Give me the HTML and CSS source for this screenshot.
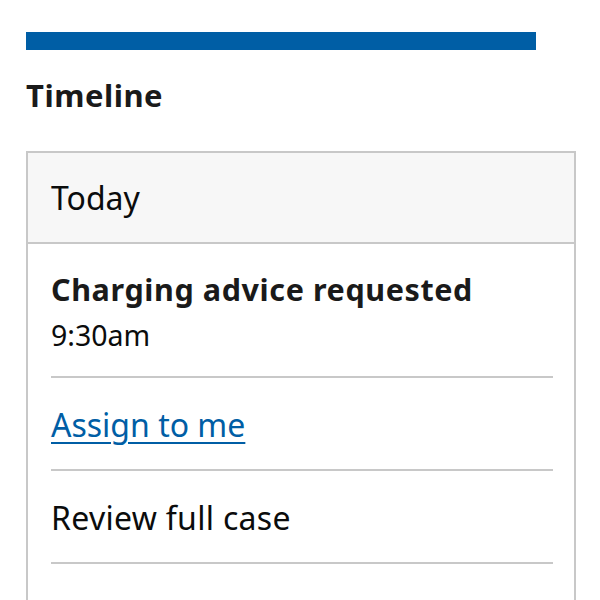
FILE: index.html
```html
<!DOCTYPE html>
<html lang="en">
<head>
<meta charset="utf-8">
<title>Timeline</title>
<link rel="stylesheet" href="styles.css">
</head>
<body>
<div class="page">
  <div class="bar"></div>
  <h2 class="heading">Timeline</h2>
  <section class="card">
    <header class="card-head">Today</header>
    <div class="card-body">
      <div class="row row-event">
        <p class="event-title">Charging advice requested</p>
        <p class="event-time">9:30am</p>
      </div>
      <div class="row"><a class="link" href="#">Assign to me</a></div>
      <div class="row row-text">Review full case</div>
      <div class="row">&nbsp;</div>
    </div>
  </section>
</div>
</body>
</html>
```

FILE: styles.css
```css
html, body {
  margin: 0;
  background: #ffffff;
}
body {
  font-family: "Noto Sans", sans-serif;
  color: #0b0c0c;
}
.page {
  padding: 32px 0 0 26px;
}
.bar {
  width: 510px;
  height: 18px;
  background: #005ea5;
}
.heading {
  margin: 25px 0 0;
  font-size: 31px;
  letter-spacing: 0.5px;
  line-height: 40px;
  font-weight: 700;
  color: #1a1a1a;
}
.card {
  margin-top: 36px;
  width: 546px;
  border: 2px solid #c8c8c8;
}
.card-head {
  background: #f7f7f7;
  border-bottom: 2px solid #c8c8c8;
  padding: 0 23px;
  height: 89px;
  display: flex;
  align-items: center;
  font-size: 32px;
}
.card-body {
  padding: 0 21px 0 23px;
  font-size: 32px;
}
.row {
  border-bottom: 2px solid #c8c8c8;
  padding: 27px 0 24px;
  line-height: 40px;
}
.row-event {
  padding: 25px 0 21px;
}
.row-text {
  letter-spacing: 0.3px;
}
.event-title {
  margin: 0;
  font-size: 30.5px;
  letter-spacing: 0.6px;
  font-weight: 700;
  color: #1a1a1a;
}
.event-time {
  margin: 6px 0 0;
  font-size: 28.5px;
}
.link {
  color: #005ea5;
  text-decoration: underline;
  text-decoration-thickness: 2px;
  text-underline-offset: 5px;
}
```
